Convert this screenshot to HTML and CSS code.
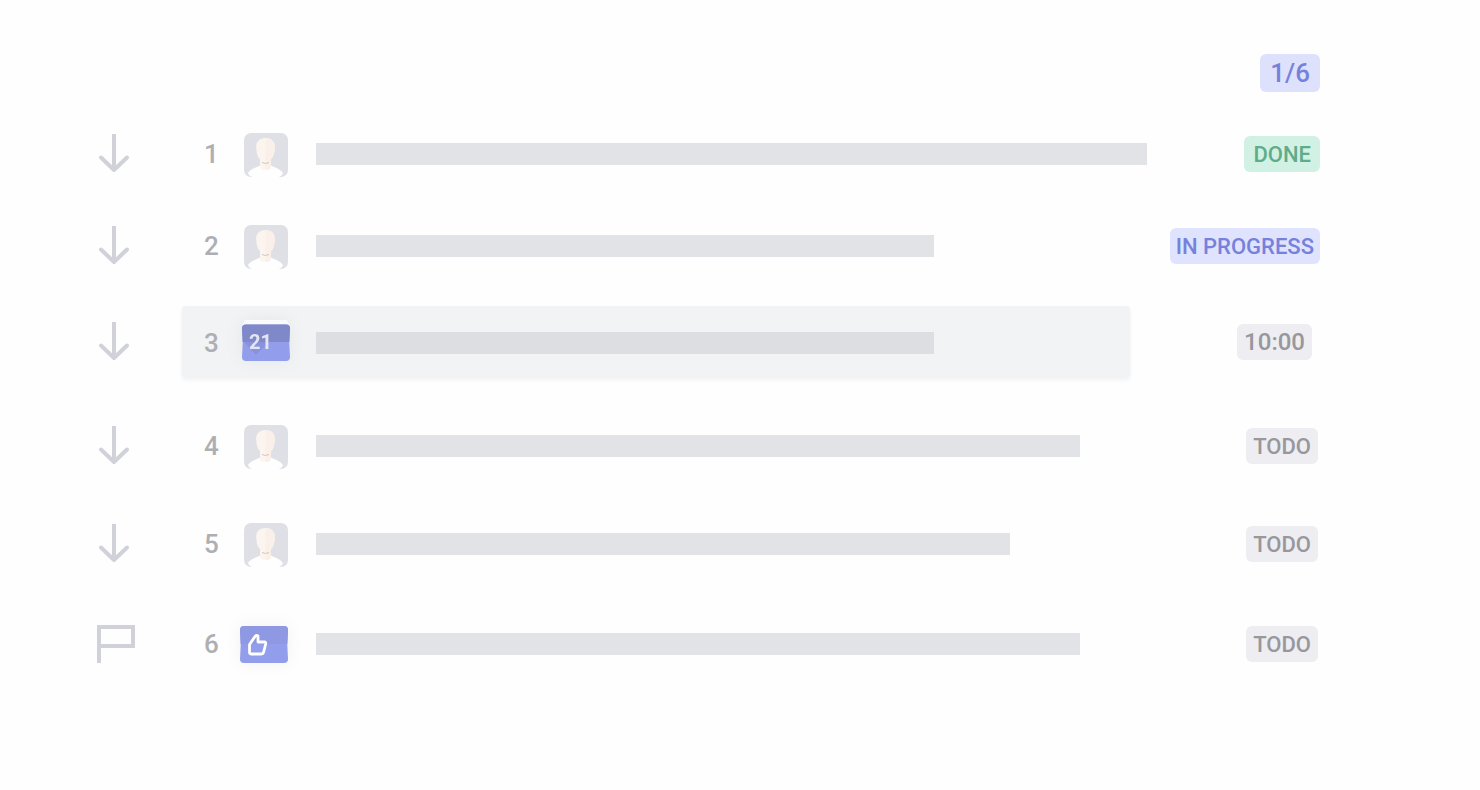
FILE: index.html
```
<!DOCTYPE html>
<html lang="en">

<head>
    <meta charset="UTF-8">
    <meta name="viewport" content="width=device-width, initial-scale=1.0">
    <title>Tasks</title>
    <link rel="stylesheet" href="styles.css">
</head>

<body>

    <!-- Shared icons -->
    <svg class="sprite" aria-hidden="true">
        <symbol id="icon-arrow" viewBox="0 0 40 40">
            <path d="M18 0V36" fill="none" stroke="#d1d2d9" stroke-width="4" />
            <path d="M5 23.500L18 36L31 23.500" fill="none" stroke="#d1d2d9" stroke-width="4" stroke-linecap="round" stroke-linejoin="round" />
        </symbol>
        <symbol id="icon-avatar" viewBox="0 0 44 44">
            <rect width="44" height="44" rx="7" fill="#dfdfe6" />
            <path d="M4 40C6 36.500 11 35 16 32.500H27C32 35 37 36.500 39 40C38.500 42 37 43 35 44H8C6 43 4.500 42 4 40Z" fill="#fefefe" />
            <path d="M21.500 5C15 5 12 9 12.200 14C12.400 20 13.500 24 16 26V34Q16.500 37 21.500 37Q26.500 37 27 34V26C29.500 24 30.600 20 30.800 14C31 9 28 5 21.500 5Z" fill="#fcf5ef" />
            <path d="M21.500 5C28 5 31 9 30.800 14C30.600 20 29.500 24 27 26V34Q26.500 37 21.500 37Z" fill="#faf0e9" />
            <path d="M18 29.500Q21.500 31.500 25 29.500" fill="none" stroke="#cfc6c0" />
        </symbol>
    </svg>

    <main class="board">
        <header class="board-header">
            <span class="badge badge-count">1/6</span>
        </header>

        <ol class="task-list">
            <li class="task">
                <svg class="step" aria-hidden="true"><use href="#icon-arrow" /></svg>
                <div class="card">
                    <span class="number">1</span>
                    <svg class="avatar" aria-hidden="true"><use href="#icon-avatar" /></svg>
                    <div class="track"><div class="bar" style="width: 100%"></div></div>
                </div>
                <span class="badge badge-done">DONE</span>
            </li>

            <li class="task task-second">
                <svg class="step" aria-hidden="true"><use href="#icon-arrow" /></svg>
                <div class="card">
                    <span class="number">2</span>
                    <svg class="avatar" aria-hidden="true"><use href="#icon-avatar" /></svg>
                    <div class="track"><div class="bar" style="width: 74.4%"></div></div>
                </div>
                <span class="badge badge-progress">IN PROGRESS</span>
            </li>

            <li class="task task-third">
                <svg class="step" aria-hidden="true"><use href="#icon-arrow" /></svg>
                <div class="card card-active">
                    <span class="number">3</span>
                    <svg class="tile" viewBox="0 0 52 52">
                        <path d="M5 3H47L49 8V16H3V8Z" fill="#fafafb" />
                        <path d="M6 7.500H46Q50 7.500 50 11.500L49.300 26L50 40Q50 44 46 44H6Q2 44 2 40L2.700 26L2 11.500Q2 7.500 6 7.500Z" fill="#929deb" />
                        <path d="M6 7.500H46Q50 7.500 50 11.500L49.300 25H2.700L2 11.500Q2 7.500 6 7.500Z" fill="#7f88c9" />
                        <path d="M4 25H29L16 38Z" fill="#8993dc" />
                        <text class="tile-date" x="9" y="32">21</text>
                    </svg>
                    <div class="track"><div class="bar" style="width: 75.9%"></div></div>
                </div>
                <span class="badge badge-time">10:00</span>
            </li>

            <li class="task task-fourth">
                <svg class="step" aria-hidden="true"><use href="#icon-arrow" /></svg>
                <div class="card">
                    <span class="number">4</span>
                    <svg class="avatar" aria-hidden="true"><use href="#icon-avatar" /></svg>
                    <div class="track"><div class="bar" style="width: 91.9%"></div></div>
                </div>
                <span class="badge badge-todo">TODO</span>
            </li>

            <li class="task task-fifth">
                <svg class="step" aria-hidden="true"><use href="#icon-arrow" /></svg>
                <div class="card">
                    <span class="number">5</span>
                    <svg class="avatar" aria-hidden="true"><use href="#icon-avatar" /></svg>
                    <div class="track"><div class="bar" style="width: 83.5%"></div></div>
                </div>
                <span class="badge badge-todo">TODO</span>
            </li>

            <li class="task task-sixth">
                <svg class="step" viewBox="0 0 40 40" aria-hidden="true">
                    <path d="M3 39V3H37V22H3" fill="none" stroke="#d1d2d9" stroke-width="4" />
                </svg>
                <div class="card">
                    <span class="number">6</span>
                    <svg class="tile" viewBox="0 0 52 52" aria-hidden="true">
                        <path d="M4 8H44Q48 8 48 12L47.300 27L48 41Q48 45 44 45H4Q0 45 0 41L0.700 27L0 12Q0 8 4 8Z" fill="#929deb" />
                        <path d="M4 8H44Q48 8 48 12L47.300 26H0.700L0 12Q0 8 4 8Z" fill="#8f98e3" />
                        <path d="M9.500 26.500L15 18.500Q16.500 16.500 18 18V24H24.500Q26 24 25.700 26L23.500 34.500Q23 36 21.500 36H11.500Q9.500 36 9.500 34Z" fill="none" stroke="#fff" stroke-width="2.800" stroke-linejoin="round" />
                    </svg>
                    <div class="track"><div class="bar" style="width: 91.9%"></div></div>
                </div>
                <span class="badge badge-todo">TODO</span>
            </li>
        </ol>
    </main>

</body>

</html>
```
FILE: styles.css
```
body {
    margin: 0;
    background-color: #fefefe;
    font-family: Roboto, Arial, sans-serif;
    font-weight: 500;
}

.sprite {
    display: none;
}

.board {
    padding: 54px 160px 54px 96px;
}

.board-header {
    display: flex;
    justify-content: flex-end;
    margin-bottom: 26px;
}

.task-list {
    list-style: none;
    margin: 0;
    padding: 0;
}

.task {
    display: grid;
    grid-template-columns: 63px 1fr 150px;
    column-gap: 23px;
    align-items: center;
}

.task-second {
    margin-top: 20px;
}

.task-third {
    margin-top: 24px;
}

.task-fourth {
    margin-top: 32px;
}

.task-fifth {
    margin-top: 26px;
}

.task-sixth {
    margin-top: 28px;
}

.step {
    width: 40px;
    height: 40px;
}

.card {
    display: flex;
    align-items: center;
    box-sizing: border-box;
    height: 72px;
    padding-left: 22px;
    border-radius: 4px;
}

.card-active {
    margin-right: 17px;
    padding-top: 2px;
    background-color: #f1f3f5;
    box-shadow: 0 2px 4px rgba(0, 0, 0, 0.05);
}

.number {
    width: 40px;
    color: #aeafb2;
    font-size: 26px;
    line-height: 32px;
}

.avatar {
    flex: none;
    width: 44px;
    height: 44px;
    margin: 2px 28px 0 0;
}

/* the tiles are wider than the avatars */
.tile {
    flex: none;
    width: 52px;
    height: 52px;
    margin: 0 24px 0 -4px;
    filter: drop-shadow(0 0 8px rgba(0, 0, 0, 0.05));
}

.tile-date {
    fill: #e4e5f2;
    font-size: 20px;
    font-weight: 700;
}

.track {
    flex: 1;
}

.bar {
    height: 22px;
    background-color: #e2e3e7;
}

.card-active .bar {
    background-color: #dddee2;
}

.badge {
    justify-self: end;
    padding: 1px 7px 0;
    border-radius: 6px;
    font-size: 22px;
    line-height: 35px;
    white-space: nowrap;
}

.badge-count {
    padding: 0 10px;
    background-color: #dee1fc;
    color: #7681db;
    font-size: 26px;
    line-height: 38px;
}

.badge-done {
    padding: 1px 9px 0;
    background-color: #d1f1e4;
    color: #5fac8b;
}

.badge-progress {
    padding: 1px 6px 0;
    background-color: #dfe3fe;
    color: #7681db;
}

.badge-time {
    margin-right: 8px;
    background-color: #eeedf2;
    color: #97979c;
    font-size: 24px;
}

.badge-todo {
    margin-right: 2px;
    background-color: #eeedf2;
    color: #97979c;
}
```
